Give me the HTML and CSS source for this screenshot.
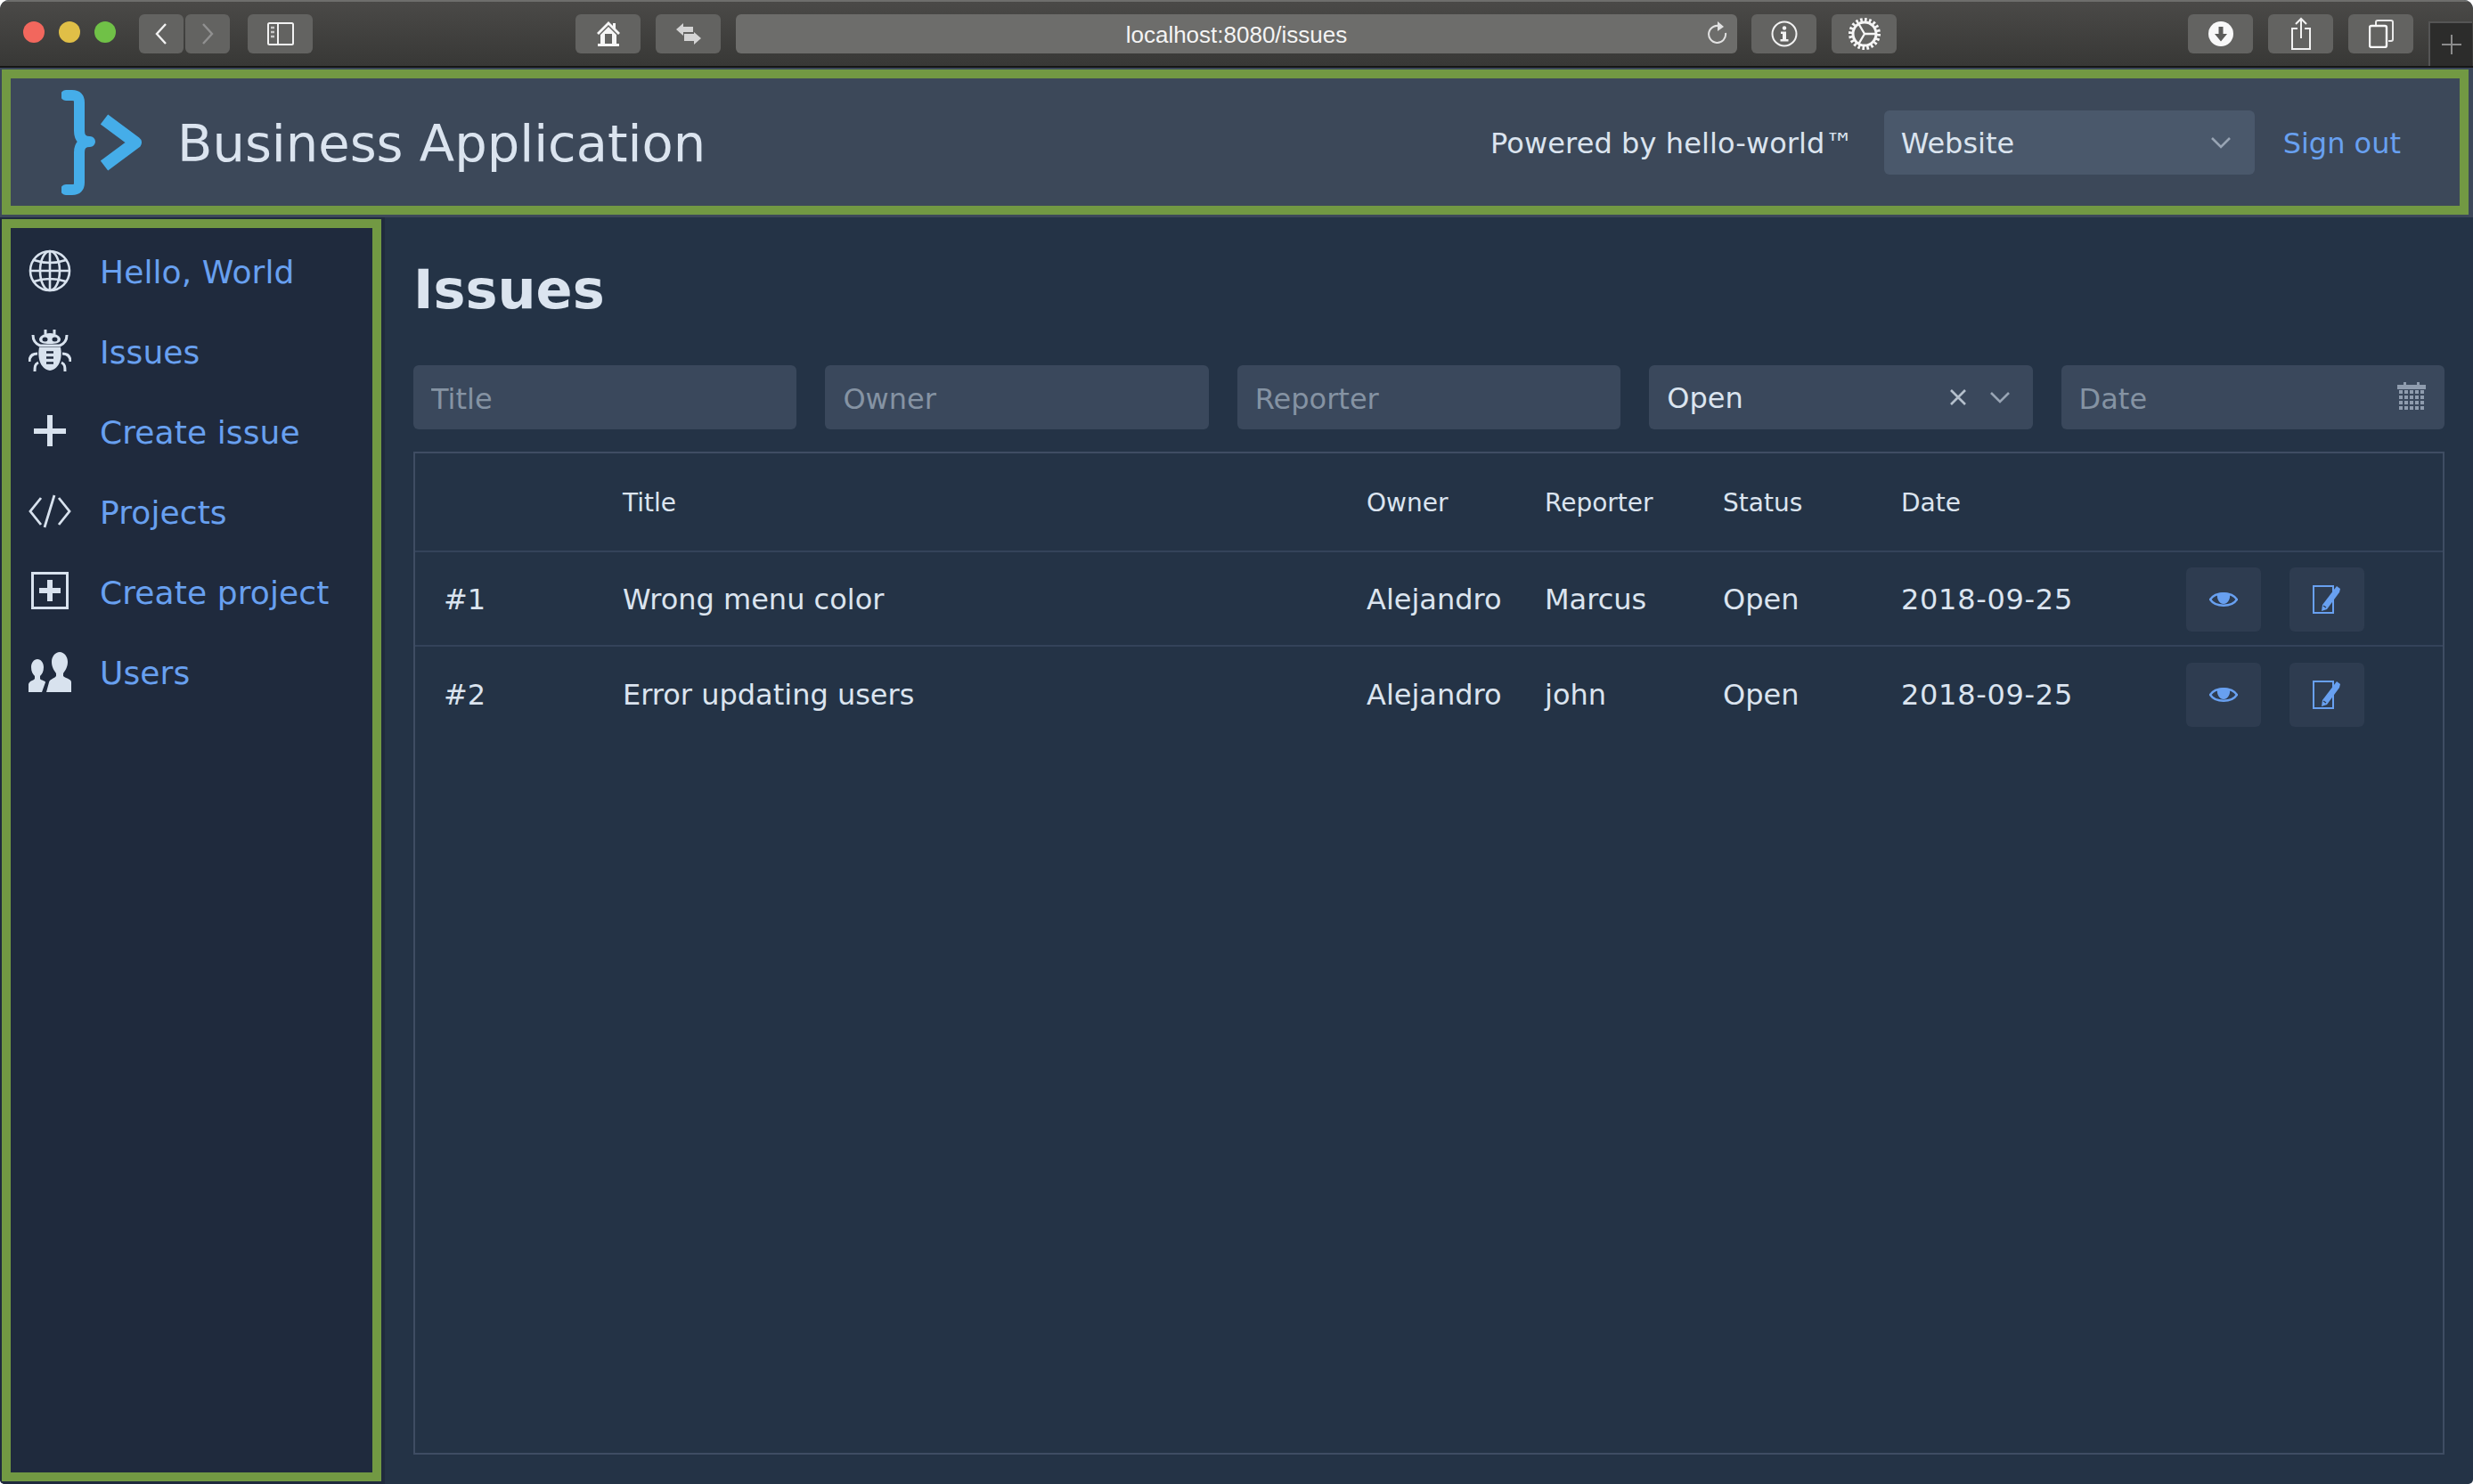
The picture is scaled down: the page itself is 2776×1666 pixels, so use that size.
FILE: index.html
```html
<!DOCTYPE html>
<html lang="en">
<head>
    <meta charset="UTF-8">
    <title>Business Application</title>
    <link rel="stylesheet" href="styles.css">
</head>
<body>
    <svg class="defs" width="0" height="0">
        <symbol id="eye" viewBox="0 0 32 32">
            <path d="M1 16 C7 7 25 7 31 16 C25 25 7 25 1 16 Z" fill="none" stroke="currentColor" stroke-width="2.4"/>
            <path d="M9 9.5 C13 7.8 19 7.8 23 9.5 C24 15 21 21 16 21 C11 21 8 15 9 9.5 Z" fill="currentColor"/>
        </symbol>
        <symbol id="edit" viewBox="0 0 32 32">
            <rect x="1" y="1" width="22" height="30" fill="none" stroke="currentColor" stroke-width="2"/>
            <path d="M27 1 L31 4 L30 8 L16 27 L10 29 L11 22 Z" fill="currentColor"/>
            <path d="M12 23 L15 25" stroke="#2e3c50" stroke-width="1.4"/>
        </symbol>
    </svg>

    <div class="window">
        <div class="toolbar">
            <div class="lights">
                <span class="light light-red"></span>
                <span class="light light-yellow"></span>
                <span class="light light-green"></span>
            </div>
            <div class="tool tool-half tool-back">
                <svg width="16" height="26" viewBox="0 0 16 26"><path d="M13 2 L3 13 L13 24" fill="none" stroke="#f2f2f2" stroke-width="2.4"/></svg>
            </div>
            <div class="tool tool-half tool-fwd">
                <svg width="16" height="26" viewBox="0 0 16 26"><path d="M3 2 L13 13 L3 24" fill="none" stroke="#909090" stroke-width="2.4"/></svg>
            </div>
            <div class="tool tool-side">
                <svg width="30" height="26" viewBox="0 0 30 26">
                    <rect x="1" y="1" width="28" height="24" rx="1.5" fill="none" stroke="#f2f2f2" stroke-width="2"/>
                    <path d="M12 1 V25" stroke="#f2f2f2" stroke-width="2"/>
                    <path d="M4 6 H8 M4 11 H8 M4 16 H8" stroke="#c8c8c8" stroke-width="2.4"/>
                </svg>
            </div>
            <div class="tool tool-home">
                <svg width="26" height="28" viewBox="0 0 26 28">
                    <path d="M0 13 L13 0 L18 5 V2 H21 V8 L26 13 L24 15 L13 4 L2 15 Z" fill="#f6f6f6"/>
                    <path d="M4 15 L13 6 L22 15 V25 H17 V14 H9 V25 H4 Z" fill="#f6f6f6"/>
                    <rect x="1" y="25" width="24" height="3" fill="#f6f6f6"/>
                </svg>
            </div>
            <div class="tool">
                <svg width="28" height="24" viewBox="0 0 28 24">
                    <path d="M0 7 L8 0 V4 H19 V10 H8 V14 Z" fill="#d4d4d4"/>
                    <path d="M28 17 L20 10 V12 H9 V20 H20 V24 Z" fill="#d4d4d4"/>
                </svg>
            </div>
            <div class="url">
                <span class="url-text">localhost:8080/issues</span>
                <svg class="url-reload" width="22" height="28" viewBox="0 0 22 28">
                    <path d="M15 6 A9.5 9.5 0 1 0 20 13" fill="none" stroke="#e2e2e2" stroke-width="2"/>
                    <path d="M11 0 L18 6 L11 11 Z" fill="#e2e2e2"/>
                </svg>
            </div>
            <div class="tool tool-info">
                <svg width="30" height="30" viewBox="0 0 30 30">
                    <circle cx="15" cy="15" r="13.5" fill="none" stroke="#f2f2f2" stroke-width="2"/>
                    <circle cx="15" cy="8.5" r="2.2" fill="#f2f2f2"/>
                    <path d="M11 12.5 H17 V21 H19.5 V23.5 H10.5 V21 H13 V15 H11 Z" fill="#f2f2f2"/>
                </svg>
            </div>
            <div class="tool tool-gear">
                <svg width="36" height="36" viewBox="0 0 36 36">
                    <circle cx="18" cy="18" r="13" fill="none" stroke="#f6f6f6" stroke-width="3"/>
                    <circle cx="18" cy="18" r="16" fill="none" stroke="#f6f6f6" stroke-width="4" stroke-dasharray="2.6 2.4"/>
                    <path d="M18 18 H31 M18 18 L11.5 7 M18 18 L11.5 29" stroke="#f6f6f6" stroke-width="2.4"/>
                </svg>
            </div>
            <div class="tool tool-download">
                <svg width="28" height="28" viewBox="0 0 28 28">
                    <circle cx="14" cy="14" r="14" fill="#f8f8f8"/>
                    <path d="M11.5 6 H16.5 V14 H21 L14 22.5 L7 14 H11.5 Z" fill="#5c5c5a"/>
                </svg>
            </div>
            <div class="tool">
                <svg width="24" height="38" viewBox="0 0 24 38">
                    <path d="M8 13 H2 V36 H22 V13 H16" fill="none" stroke="#f2f2f2" stroke-width="2"/>
                    <path d="M12 24 V2 M6 8 L12 2 L18 8" fill="none" stroke="#f2f2f2" stroke-width="2"/>
                </svg>
            </div>
            <div class="tool">
                <svg width="28" height="32" viewBox="0 0 28 32">
                    <path d="M8 6 V3 Q8 1 10 1 H25 Q27 1 27 3 V22 Q27 24 25 24 H22" fill="none" stroke="#e8e8e8" stroke-width="2"/>
                    <rect x="1" y="7" width="19" height="24" rx="2" fill="none" stroke="#f8f8f8" stroke-width="2.4"/>
                </svg>
            </div>
            <div class="new-tab">
                <svg width="22" height="22" viewBox="0 0 22 22"><path d="M11 0 V22 M0 11 H22" stroke="#8b8b8b" stroke-width="2"/></svg>
            </div>
        </div>

        <div class="topbar">
            <header class="topbar-box">
                <svg class="logo" width="92" height="118" viewBox="0 0 92 118">
                    <path d="M5 6 H12 Q20 6 20 14 V46 Q20 58 32 58 Q20 58 20 70 V104 Q20 112 12 112 H5" fill="none" stroke="#45ade9" stroke-width="12" stroke-linecap="round" stroke-linejoin="round"/>
                    <path d="M48 33 L83 59 L48 85" fill="none" stroke="#45ade9" stroke-width="14" stroke-linejoin="round"/>
                </svg>
                <h1 class="brand">Business Application</h1>
                <span class="powered">Powered by hello-world™</span>
                <div class="select select-site">
                    <span>Website</span>
                    <svg class="chevron" width="24" height="14" viewBox="0 0 24 14"><path d="M2 2 L12 12 L22 2" fill="none" stroke="#98a4b4" stroke-width="2.6"/></svg>
                </div>
                <a class="sign-out" href="#">Sign out</a>
            </header>
        </div>

        <div class="body-row">
            <div class="sidebar">
                <nav class="sidebar-box">
                    <a class="nav-item" href="#">
                        <svg class="nav-icon" viewBox="0 0 48 48" fill="none" stroke="currentColor" stroke-width="2.6">
                            <circle cx="24" cy="24" r="22"/>
                            <ellipse cx="24" cy="24" rx="11" ry="22"/>
                            <path d="M24 2 V46 M2 24 H46 M6 12 Q24 18 42 12 M6 36 Q24 30 42 36"/>
                        </svg>
                        <span>Hello, World</span>
                    </a>
                    <a class="nav-item" href="#">
                        <svg class="nav-icon" viewBox="0 0 48 48" fill="currentColor">
                            <path d="M19 0 V5 M29 0 V5" stroke="currentColor" stroke-width="3"/>
                            <path d="M24 4 C31 4 36 8 36 11 C36 15 31 16 24 16 C17 16 12 15 12 11 C12 8 17 4 24 4 Z"/>
                            <path d="M5 6 C5 12 8 16 13 18 H35 C40 16 43 12 43 6" fill="none" stroke="currentColor" stroke-width="3"/>
                            <path d="M12 20 H36 C38 30 36 44 24 46 C12 44 10 30 12 20 Z"/>
                            <path d="M10 27 C4 27 1 30 1 36 M38 27 C44 27 47 30 47 36 M11 37 C7 39 7 42 7 47 M37 37 C41 39 41 42 41 47" fill="none" stroke="currentColor" stroke-width="3"/>
                            <ellipse cx="18.5" cy="11" rx="3" ry="2.5" fill="#1f2a3d"/>
                            <ellipse cx="29.5" cy="11" rx="3" ry="2.5" fill="#1f2a3d"/>
                            <path d="M20 25.5 H28 M20 31.5 H28 M20 37.5 H28" stroke="#1f2a3d" stroke-width="2.4"/>
                        </svg>
                        <span>Issues</span>
                    </a>
                    <a class="nav-item" href="#">
                        <svg class="nav-icon" viewBox="0 0 48 48" fill="currentColor">
                            <rect x="21" y="6" width="6" height="35"/>
                            <rect x="6" y="21" width="36" height="6"/>
                        </svg>
                        <span>Create issue</span>
                    </a>
                    <a class="nav-item" href="#">
                        <svg class="nav-icon" viewBox="0 0 48 48" fill="none" stroke="currentColor" stroke-width="2.8">
                            <path d="M14 9 L2 24 L14 39 M34 9 L46 24 L34 39 M29 6 L18 42"/>
                        </svg>
                        <span>Projects</span>
                    </a>
                    <a class="nav-item" href="#">
                        <svg class="nav-icon" viewBox="0 0 48 48" fill="currentColor">
                            <rect x="4.5" y="3.5" width="39" height="39" fill="none" stroke="currentColor" stroke-width="3"/>
                            <rect x="21" y="11" width="6" height="24"/>
                            <rect x="12" y="20" width="24" height="6"/>
                        </svg>
                        <span>Create project</span>
                    </a>
                    <a class="nav-item" href="#">
                        <svg class="nav-icon" viewBox="0 0 48 48" fill="currentColor">
                            <path d="M10 10 C14 10 17 14 17 19 C17 24 15 27 13 29 V32 C14 34 19 34 19 36 L15 47 H0 V38 C1 34 6 34 7 32 V29 C5 27 3 24 3 19 C3 14 6 10 10 10 Z"/>
                            <path d="M35 2 C40 2 44 7 44 13 C44 19 41 23 39 26 V29 C42 32 48 32 48 36 V47 H20 L23 36 C24 32 29 32 31 29 V26 C29 23 26 19 26 13 C26 7 30 2 35 2 Z"/>
                        </svg>
                        <span>Users</span>
                    </a>
                </nav>
            </div>

            <main class="content">
                <h2 class="page-title">Issues</h2>

                <div class="filters">
                    <input class="field" type="text" placeholder="Title">
                    <input class="field" type="text" placeholder="Owner">
                    <input class="field" type="text" placeholder="Reporter">
                    <div class="field select">
                        <span>Open</span>
                        <svg class="clear" width="20" height="20" viewBox="0 0 20 20"><path d="M2 2 L18 18 M18 2 L2 18" stroke="#b4bfcc" stroke-width="2.6"/></svg>
                        <svg class="chevron" width="24" height="14" viewBox="0 0 24 14"><path d="M2 2 L12 12 L22 2" fill="none" stroke="#98a4b4" stroke-width="2.6"/></svg>
                    </div>
                    <div class="date-field">
                        <input class="field" type="text" placeholder="Date">
                        <svg class="calendar" width="32" height="32" viewBox="0 0 32 32" fill="#8f9cae">
                            <path d="M0 3 H7 V0 H10 V3 H22 V0 H25 V3 H32 V8 H0 Z"/>
                            <path d="M2 11 H30 M2 17 H30 M2 23 H30 M2 29 H30" stroke="#8f9cae" stroke-width="4" stroke-dasharray="4 2"/>
                        </svg>
                    </div>
                </div>

                <div class="table-box">
                    <table class="issues">
                        <colgroup>
                            <col class="col-id">
                            <col class="col-title">
                            <col class="col-person">
                            <col class="col-person">
                            <col class="col-person">
                            <col class="col-date">
                            <col>
                        </colgroup>
                        <thead>
                            <tr>
                                <th></th>
                                <th>Title</th>
                                <th>Owner</th>
                                <th>Reporter</th>
                                <th>Status</th>
                                <th>Date</th>
                                <th></th>
                            </tr>
                        </thead>
                        <tbody>
                            <tr>
                                <td>#1</td>
                                <td>Wrong menu color</td>
                                <td>Alejandro</td>
                                <td>Marcus</td>
                                <td>Open</td>
                                <td class="cell-date">2018-09-25</td>
                                <td class="actions">
                                    <button class="icon-btn"><svg class="icon-eye"><use href="#eye"/></svg></button>
                                    <button class="icon-btn"><svg class="icon-edit"><use href="#edit"/></svg></button>
                                </td>
                            </tr>
                            <tr>
                                <td>#2</td>
                                <td>Error updating users</td>
                                <td>Alejandro</td>
                                <td>john</td>
                                <td>Open</td>
                                <td class="cell-date">2018-09-25</td>
                                <td class="actions">
                                    <button class="icon-btn"><svg class="icon-eye"><use href="#eye"/></svg></button>
                                    <button class="icon-btn"><svg class="icon-edit"><use href="#edit"/></svg></button>
                                </td>
                            </tr>
                        </tbody>
                    </table>
                </div>
            </main>
        </div>
    </div>
</body>
</html>
```

FILE: styles.css
```css
* {
    box-sizing: border-box;
}
html, body {
    margin: 0;
    height: 100%;
    background: #fff;
}
body {
    font-family: "DejaVu Sans", Verdana, sans-serif;
    color: #dbe4ef;
    overflow: hidden;
}
.defs {
    position: absolute;
}
a {
    color: #68a0f0;
    text-decoration: none;
}
.window {
    height: 100vh;
    display: flex;
    flex-direction: column;
    background: #243346;
    border-radius: 10px 10px 5px 5px;
    overflow: hidden;
}

/* browser chrome */
.toolbar {
    height: 76px;
    flex: none;
    display: flex;
    align-items: flex-start;
    padding-top: 14px;
    background: linear-gradient(#4a4947, #383836);
    border-top: 2px solid #6e6e6c;
    border-bottom: 2px solid #161616;
}
.lights {
    display: flex;
    gap: 16px;
    margin: 8px 0 0 26px;
}
.light {
    width: 24px;
    height: 24px;
    border-radius: 50%;
}
.light-red { background: #f2675d; }
.light-yellow { background: #e0bf47; }
.light-green { background: #70c147; }
.tool {
    width: 73px;
    height: 44px;
    flex: none;
    display: flex;
    align-items: center;
    justify-content: center;
    background: #636361;
    border-radius: 6px;
    margin-left: 17px;
}
.tool-half {
    width: 50px;
}
.tool-back {
    margin-left: 26px;
}
.tool-fwd {
    margin-left: 2px;
}
.tool-side {
    margin-left: 20px;
}
.tool-home {
    margin-left: 295px;
}
.tool-info {
    margin-left: 16px;
}
.tool-gear {
    margin-left: 17px;
}
.tool-download {
    margin-left: 327px;
}
.url {
    width: 1124px;
    height: 44px;
    flex: none;
    margin-left: 17px;
    display: flex;
    align-items: center;
    position: relative;
    justify-content: center;
    background: #6d6d6b;
    border-radius: 6px;
    font-family: "Liberation Sans", Arial, sans-serif;
    font-size: 26px;
    color: #f4f4f4;
}
.url-text {
    padding-top: 2px;
}
.url-reload {
    position: absolute;
    right: 11px;
    top: 8px;
}
.new-tab {
    width: 49px;
    height: 50px;
    margin: 8px 0 0 17px;
    flex: none;
    display: flex;
    align-items: center;
    justify-content: center;
    background: #2c2c2b;
    border: solid #555;
    border-width: 2px 0 0 2px;
}

/* app header */
.topbar {
    flex: none;
    height: 168px;
    padding: 2px 5px 3px 2px;
    background: #3c4859;
}
.topbar-box {
    height: 100%;
    display: flex;
    align-items: center;
    border: 10px solid #729943;
    padding-left: 57px;
}
.logo {
    flex: none;
}
.brand {
    margin: 0 0 0 38px;
    padding-top: 3px;
    font-size: 57.5px;
    font-weight: normal;
    color: #dbe4ef;
    flex: 1;
}
.powered {
    padding-top: 2px;
    font-size: 32px;
    letter-spacing: 0.1px;
}
.select {
    display: flex;
    align-items: center;
    font-size: 32px;
}
.select span {
    flex: 1;
    padding-top: 2px;
}
.select-site {
    width: 416px;
    height: 72px;
    margin-left: 34px;
    padding: 0 26px 0 19px;
    background: #4a586b;
    border-radius: 6px;
}
.sign-out {
    margin: 0 66px 0 32px;
    padding-top: 2px;
    font-size: 32px;
}

/* sidebar */
.body-row {
    flex: 1;
    display: flex;
    min-height: 0;
}
.sidebar {
    width: 432px;
    flex: none;
    padding: 2px 4px 3px 2px;
    background: #1f2a3d;
}
.sidebar-box {
    height: 100%;
    border: 10px solid #729943;
    padding-top: 3px;
}
.nav-item {
    height: 90px;
    display: flex;
    align-items: center;
    gap: 32px;
    padding-left: 20px;
    font-size: 36px;
    letter-spacing: 0.1px;
}
.nav-item span {
    padding-top: 2px;
}
.nav-icon {
    width: 48px;
    height: 48px;
    flex: none;
    color: #d8e2ee;
}

/* main content */
.content {
    flex: 1;
    min-width: 0;
    display: flex;
    flex-direction: column;
    padding: 0 32px 33px;
}
.page-title {
    margin: 0;
    height: 166px;
    padding-top: 46px;
    font-size: 60.5px;
    line-height: 70px;
    font-weight: bold;
    color: #dbe4ef;
}
.filters {
    display: grid;
    grid-template-columns: repeat(5, 1fr);
    gap: 32px;
    margin-bottom: 25px;
}
.field {
    width: 100%;
    height: 72px;
    padding: 3px 20px 0;
    background: #3a485c;
    border: 0;
    border-radius: 6px;
    font-family: inherit;
    font-size: 32px;
    color: #dbe4ef;
}
.field::placeholder {
    color: #8593a3;
    opacity: 1;
}
.select.field {
    padding: 0 25px 0 20px;
}
.clear {
    margin-right: 25px;
}
.date-field {
    position: relative;
}
.calendar {
    position: absolute;
    top: 19px;
    right: 21px;
}
.table-box {
    flex: 1;
    border: 2px solid #3f4d63;
}
.issues {
    width: 100%;
    table-layout: fixed;
    border-collapse: collapse;
}
.col-id { width: 201px; }
.col-title { width: 835px; }
.col-person { width: 200px; }
.col-date { width: 320px; }
.issues th {
    height: 110px;
    padding: 2px 0 0 32px;
    text-align: left;
    font-size: 28px;
    font-weight: normal;
}
.issues td {
    height: 106px;
    padding: 2px 0 0 32px;
    font-size: 32px;
    white-space: nowrap;
}
.issues .cell-date {
    letter-spacing: 0.7px;
}
.issues tr {
    border-bottom: 2px solid #34435a;
}
.issues tbody tr:last-child {
    border-bottom: 0;
}
.issues .actions {
    font-size: 0;
}
.icon-btn {
    width: 84px;
    height: 72px;
    padding: 0;
    margin-right: 32px;
    background: #2e3c50;
    border: 0;
    border-radius: 6px;
    color: #68a0f0;
    display: inline-flex;
    align-items: center;
    justify-content: center;
    vertical-align: middle;
}
.icon-eye {
    width: 32px;
    height: 32px;
}
.icon-edit {
    width: 32px;
    height: 32px;
}
```
